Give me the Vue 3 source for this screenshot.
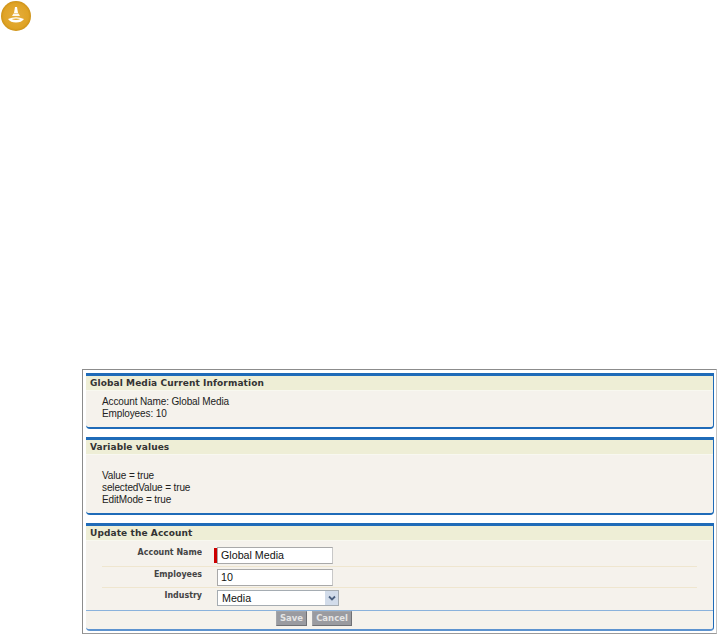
<template>
  <div class="page">
    <svg class="logo" width="32" height="32" viewBox="0 0 32 32">
      <defs>
        <radialGradient id="g" cx="50%" cy="50%" r="55%">
          <stop offset="0" stop-color="#e5ae3c" />
          <stop offset="0.75" stop-color="#dfa326" />
          <stop offset="1" stop-color="#c4890f" />
        </radialGradient>
      </defs>
      <circle cx="16" cy="16" r="15" fill="url(#g)" />
      <path d="M15 7h2l1 6h-4z" fill="#fff" />
      <path d="M13.500 13.500h5l1.500 2.500h-8z" fill="#fff" opacity="0.9" />
      <path d="M8 19q8-3.500 16 0q-2.500 3.500-8 3.500t-8-3.500zM11.500 19q4.500 2 9 0q-4.500-1.200-9 0z" fill="#fff" fill-rule="evenodd" />
    </svg>
    <div class="frame">
      <section class="panel p1">
        <h3>Global Media Current Information</h3>
        <div class="body b1">
          <p>Account Name: Global Media</p>
          <p>Employees: 10</p>
        </div>
      </section>
      <section class="panel p2">
        <h3>Variable values</h3>
        <div class="body b2">
          <p>Value = true</p>
          <p>selectedValue = true</p>
          <p>EditMode = true</p>
        </div>
      </section>
      <section class="panel p3">
        <h3>Update the Account</h3>
        <div class="form">
          <div class="row first">
            <label>Account Name</label>
            <span class="req"></span>
            <div class="box">Global Media</div>
          </div>
          <div class="row second">
            <label>Employees</label>
            <span class="req none"></span>
            <div class="box">10</div>
          </div>
          <div class="row last">
            <label>Industry</label>
            <span class="req none"></span>
            <div class="sel">
              <span>Media</span>
              <span class="arrow">
                <svg width="12" height="12" viewBox="0 0 12 12"><path d="M3 4.500l3 3 3-3" fill="none" stroke="#4a5f7e" stroke-width="1.800" /></svg>
              </span>
            </div>
          </div>
        </div>
        <div class="actions">
          <button class="save">Save</button>
          <button class="cancel">Cancel</button>
        </div>
      </section>
    </div>
  </div>
</template>

<script setup>
</script>

<style>
html, body { margin: 0; background: #fff; }
</style>

<style scoped>
.page {
  width: 718px;
  height: 635px;
  overflow: hidden;
  font-family: "Liberation Sans", Arial, sans-serif;
  font-size: 10px;
  color: #222;
  box-sizing: border-box;
}
.logo { display: block; }
.frame {
  margin: 337px 0 0 82px;
  width: 635px;
  height: 265px;
  box-sizing: border-box;
  border: 1px solid #8c8c8c;
  border-right-color: #c4c4c4;
  border-bottom-color: #9a9a9a;
  padding: 3px 2px 0 3px;
  display: flex;
  flex-direction: column;
  gap: 8px;
}
.panel {
  box-sizing: border-box;
  background: #f5f2ec;
  border-top: 3px solid #1f6bb8;
  border-right: 1px solid #1f6bb8;
  border-bottom: 2px solid #1f6bb8;
  border-bottom-right-radius: 4px;
  border-bottom-left-radius: 4px;
}
.p1 { height: 56px; }
.p2 { height: 78px; }
.p3 { height: 108px; border-bottom-color: #5d93cf; }
h3 {
  margin: 0;
  height: 14px;
  padding-left: 4px;
  background: #eeeed6;
  border-bottom: 1px solid #f8f8f0;
  font-family: "DejaVu Sans", Verdana, sans-serif;
  font-size: 9px;
  font-weight: 700;
  line-height: 14px;
  letter-spacing: 0.1px;
  color: #333;
}
.body { padding-left: 16px; }
.b1 { padding-top: 5px; }
.b2 { padding-top: 15px; }
p {
  margin: 0;
  height: 12px;
  line-height: 12px;
  font-size: 10px;
  letter-spacing: -0.12px;
}
.form { padding-top: 6px; height: 69px; box-sizing: border-box; }
.row {
  display: flex;
  align-items: flex-start;
  height: 21px;
  margin-left: 16px;
  margin-right: 16px;
  border-bottom: 1px solid #efe6cf;
  box-sizing: border-box;
  padding-top: 2px;
}
.row.first { height: 20px; padding-top: 0; }
.row.last { border-bottom: none; }
label {
  width: 100px;
  text-align: right;
  font-family: "DejaVu Sans", Verdana, sans-serif;
  font-size: 9px;
  font-weight: 700;
  color: #444;
  line-height: 11px;
  transform: scaleX(0.88);
  transform-origin: right;
}
.req {
  width: 3px;
  height: 15px;
  margin: 1px 0 0 12px;
  background: #c00;
}
.req.none { background: transparent; }
.box {
  width: 116px;
  height: 17px;
  box-sizing: border-box;
  border: 1px solid #a9a9a9;
  border-right-color: #c8c8c8;
  background: #fff;
  font-size: 10.700px;
  line-height: 15px;
  padding-left: 3px;
  color: #111;
}
.sel {
  width: 122px;
  height: 16px;
  box-sizing: border-box;
  border: 1px solid #a5acb2;
  background: #fff;
  font-size: 10.700px;
  line-height: 15px;
  padding-left: 4px;
  color: #111;
  display: flex;
  justify-content: space-between;
}
.arrow {
  width: 13px;
  height: 14px;
  background: #d2dcea;
  display: flex;
  align-items: center;
  justify-content: center;
}
.actions {
  border-top: 1px solid #8ab2dc;
  padding-left: 190px;
  display: flex;
  gap: 5px;
}
button {
  height: 15px;
  box-sizing: border-box;
  border: 1px solid #6f7074;
  border-top-color: #a4a5a9;
  border-left-color: #a4a5a9;
  background: #9a9ba0;
  color: #e4e4e4;
  font-family: "DejaVu Sans", Verdana, sans-serif;
  font-size: 8.500px;
  font-weight: 700;
  padding: 0;
  line-height: 13px;
}
.save { width: 31px; }
.cancel { width: 40px; }
</style>
